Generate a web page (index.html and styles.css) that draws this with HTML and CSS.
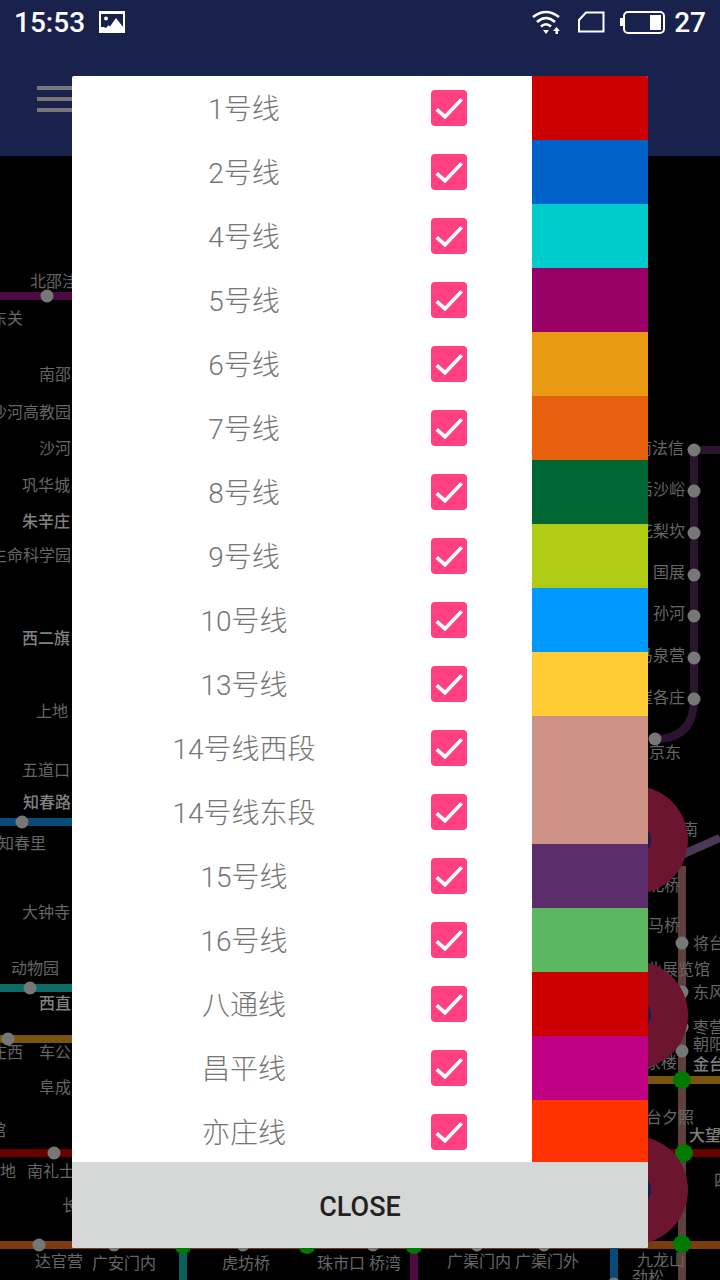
FILE: index.html
```html
<!DOCTYPE html>
<html lang="en">
<head>
    <meta charset="UTF-8">
    <meta name="viewport" content="width=device-width, initial-scale=1.0">
    <title>Subway lines</title>
    <link rel="stylesheet" href="styles.css">
</head>
<body>
    <svg class="defs" width="0" height="0">
        <symbol id="check" viewBox="0 0 36 36">
            <rect width="36" height="36" rx="4" fill="#ff4081"/>
            <polyline points="5.7,19.3 14,26.7 30.7,9.3" fill="none" stroke="#fff" stroke-width="3.6"/>
        </symbol>
    </svg>

    <div class="page">
        <header class="topbar">
            <div class="statusbar">
                <div class="status_left">
                    <span class="clock">15:53</span>
                    <svg width="26" height="22" viewBox="0 0 26 22">
                        <rect width="26" height="22" fill="#fff"/>
                        <rect x="2" y="3" width="22" height="13" fill="#19214d"/>
                        <path d="M2 20 L9 14 L11 15.500 L17 7 L24 16 L24 20 Z" fill="#fff"/>
                        <circle cx="7" cy="7.500" r="2" fill="#fff"/>
                        <path d="M5 16 L8 12.500 L10 13.500 L7 17 Z" fill="#19214d"/>
                    </svg>
                </div>
                <div class="status_right">
                    <svg class="wifi" width="31" height="24" viewBox="0 0 31 24">
                        <path d="M1 7 Q14 -3 27 7" fill="none" stroke="#fff" stroke-width="2.600"/>
                        <path d="M5 12 Q14 4 23 12" fill="none" stroke="#fff" stroke-width="2.600"/>
                        <path d="M9 16.500 Q14 12 19 16.500" fill="none" stroke="#fff" stroke-width="2.600"/>
                        <path d="M11 20 L17 20 L14 24 Z" fill="#fff"/>
                        <path d="M24.500 17 L28 21 L26 21 L26 24 L23.500 24 L23.500 21 L21 21 Z" fill="#fff"/>
                    </svg>
                    <svg class="sim" width="27" height="22" viewBox="0 0 27 22">
                        <path d="M1 20.500 L1 9 L8 1.500 L25.500 1.500 L25.500 20.500 Z" fill="none" stroke="#fff" stroke-width="2"/>
                    </svg>
                    <svg class="battery" width="45" height="24" viewBox="0 0 45 24">
                        <rect x="0" y="8" width="3" height="8" fill="#fff"/>
                        <rect x="4" y="2" width="40" height="21" rx="4" fill="none" stroke="#fff" stroke-width="2"/>
                        <rect x="30" y="5" width="11" height="15" fill="#fff"/>
                    </svg>
                    <span class="level">27</span>
                </div>
            </div>
            <div class="toolbar">
                <div class="menu_btn"><i></i><i></i><i></i></div>
            </div>
        </header>

        <svg class="map" width="720" height="1124" viewBox="0 156 720 1124">
            <g class="track" fill="none">
                <path d="M0 296 H80" stroke="#4f0a44"/>
                <path d="M0 822 H80" stroke="#0a4a78"/>
                <path d="M0 988 H80" stroke="#0d6a66"/>
                <path d="M0 1039 H80" stroke="#7a5510"/>
                <path d="M0 1153 H80" stroke="#680000"/>
                <path d="M0 1245 H720" stroke="#7d3c10"/>
                <path d="M720 450 H694 V699 Q694 739 655 739" stroke="#2c1430"/>
                <path d="M682 866 V1280" stroke="#5e403c"/>
                <path d="M670 860 L720 838" stroke="#4a3a55"/>
                <path d="M640 1080 H720" stroke="#7a5510"/>
                <path d="M640 1153 H720" stroke="#680000"/>
                <path d="M183 1245 V1280" stroke="#0d5f5f"/>
                <path d="M414 1245 V1280" stroke="#4f0a44"/>
                <path d="M614 1245 V1280" stroke="#0a4a78"/>
            </g>

            <g class="stop">
                <circle cx="47" cy="296" r="6.500"/>
                <circle cx="22" cy="822" r="6.500"/>
                <circle cx="30" cy="988" r="6.500"/>
                <circle cx="8" cy="1039" r="6.500"/>
                <circle cx="54" cy="1153" r="6.500"/>
                <circle cx="39" cy="1245" r="6.500"/>
                <circle cx="114" cy="1245" r="6.500"/>
                <circle cx="243" cy="1245" r="6.500"/>
                <circle cx="373" cy="1245" r="6.500"/>
                <circle cx="477" cy="1245" r="6.500"/>
                <circle cx="544" cy="1245" r="6.500"/>
                <circle cx="614" cy="1284" r="6.500"/>
                <circle cx="694" cy="450" r="6.500"/>
                <circle cx="694" cy="491" r="6.500"/>
                <circle cx="694" cy="533" r="6.500"/>
                <circle cx="694" cy="575" r="6.500"/>
                <circle cx="694" cy="616" r="6.500"/>
                <circle cx="694" cy="658" r="6.500"/>
                <circle cx="694" cy="699" r="6.500"/>
                <circle cx="655" cy="739" r="6.500"/>
                <circle cx="682" cy="943" r="6.500"/>
                <circle cx="682" cy="992" r="6.500"/>
                <circle cx="682" cy="1027" r="6.500"/>
                <circle cx="682" cy="1051" r="6.500"/>
            </g>
            <g class="transfer">
                <circle cx="183" cy="1245" r="9"/>
                <circle cx="307" cy="1245" r="9"/>
                <circle cx="414" cy="1245" r="9"/>
                <circle cx="682" cy="1080" r="9"/>
                <circle cx="684" cy="1153" r="9"/>
                <circle cx="682" cy="1244" r="9"/>
            </g>

            <g class="names">
                <text x="30" y="287">北邵洼</text>
                <text x="23" y="324" text-anchor="end">东关</text>
                <text x="71" y="380" text-anchor="end">南邵</text>
                <text x="71" y="418" text-anchor="end">沙河高教园</text>
                <text x="71" y="454" text-anchor="end">沙河</text>
                <text x="70" y="491" text-anchor="end">巩华城</text>
                <text class="major" x="70" y="527" text-anchor="end">朱辛庄</text>
                <text x="71" y="561" text-anchor="end">生命科学园</text>
                <text class="major" x="70" y="644" text-anchor="end">西二旗</text>
                <text x="68" y="717" text-anchor="end">上地</text>
                <text x="70" y="776" text-anchor="end">五道口</text>
                <text class="major" x="71" y="808" text-anchor="end">知春路</text>
                <text x="46" y="849" text-anchor="end">知春里</text>
                <text x="70" y="918" text-anchor="end">大钟寺</text>
                <text x="11" y="974">动物园</text>
                <text class="major" x="39" y="1009">西直门</text>
                <text x="23" y="1058" text-anchor="end">庄西</text>
                <text x="39" y="1058">车公庄</text>
                <text x="39" y="1093">阜成门</text>
                <text x="6" y="1136" text-anchor="end">馆</text>
                <text x="16" y="1177" text-anchor="end">地</text>
                <text x="27" y="1177">南礼士路</text>
                <text x="62" y="1211">长椿街</text>
                <text x="35" y="1267">达官营</text>
                <text x="92" y="1269">广安门内</text>
                <text x="222" y="1269">虎坊桥</text>
                <text x="317" y="1269">珠市口</text>
                <text x="369" y="1269">桥湾</text>
                <text x="447" y="1267">广渠门内</text>
                <text x="515" y="1267">广渠门外</text>
                <text x="637" y="1266">九龙山</text>
                <text x="632" y="1283">劲松</text>
                <text x="684" y="454" text-anchor="end">南法信</text>
                <text x="685" y="495" text-anchor="end">后沙峪</text>
                <text x="685" y="537" text-anchor="end">花梨坎</text>
                <text x="685" y="578" text-anchor="end">国展</text>
                <text x="685" y="619" text-anchor="end">孙河</text>
                <text x="685" y="661" text-anchor="end">马泉营</text>
                <text x="685" y="703" text-anchor="end">崔各庄</text>
                <text x="681" y="758" text-anchor="end">望京东</text>
                <text x="698" y="835" text-anchor="end">望京南</text>
                <text x="680" y="891" text-anchor="end">北桥</text>
                <text x="680" y="931" text-anchor="end">亮马桥</text>
                <text x="693" y="949">将台</text>
                <text x="710" y="975" text-anchor="end">农业展览馆</text>
                <text x="693" y="998">东风北桥</text>
                <text x="693" y="1033">枣营</text>
                <text x="693" y="1050">朝阳公园</text>
                <text class="major" x="693" y="1070">金台路</text>
                <text x="677" y="1068" text-anchor="end">呼家楼</text>
                <text x="694" y="1123" text-anchor="end">金台夕照</text>
                <text class="major" x="689" y="1141">大望路</text>
                <text x="714" y="1186">四惠</text>
            </g>

            <g class="hub">
                <circle cx="634" cy="840" r="54"/>
                <circle cx="634" cy="1015" r="54"/>
                <circle cx="634" cy="1190" r="54"/>
            </g>
            <g class="hub_core">
                <circle cx="634" cy="840" r="17"/>
                <circle cx="634" cy="1015" r="17"/>
                <circle cx="634" cy="1190" r="17"/>
            </g>
        </svg>
    </div>

    <div class="dialog">
        <div class="line_list">
            <div class="line_row"><span class="line_name">1号线</span><svg class="tick"><use href="#check"/></svg><span class="swatch c1"></span></div>
            <div class="line_row"><span class="line_name">2号线</span><svg class="tick"><use href="#check"/></svg><span class="swatch c2"></span></div>
            <div class="line_row"><span class="line_name">4号线</span><svg class="tick"><use href="#check"/></svg><span class="swatch c4"></span></div>
            <div class="line_row"><span class="line_name">5号线</span><svg class="tick"><use href="#check"/></svg><span class="swatch c5"></span></div>
            <div class="line_row"><span class="line_name">6号线</span><svg class="tick"><use href="#check"/></svg><span class="swatch c6"></span></div>
            <div class="line_row"><span class="line_name">7号线</span><svg class="tick"><use href="#check"/></svg><span class="swatch c7"></span></div>
            <div class="line_row"><span class="line_name">8号线</span><svg class="tick"><use href="#check"/></svg><span class="swatch c8"></span></div>
            <div class="line_row"><span class="line_name">9号线</span><svg class="tick"><use href="#check"/></svg><span class="swatch c9"></span></div>
            <div class="line_row"><span class="line_name">10号线</span><svg class="tick"><use href="#check"/></svg><span class="swatch c10"></span></div>
            <div class="line_row"><span class="line_name">13号线</span><svg class="tick"><use href="#check"/></svg><span class="swatch c13"></span></div>
            <div class="line_row"><span class="line_name">14号线西段</span><svg class="tick"><use href="#check"/></svg><span class="swatch c14"></span></div>
            <div class="line_row"><span class="line_name">14号线东段</span><svg class="tick"><use href="#check"/></svg><span class="swatch c14"></span></div>
            <div class="line_row"><span class="line_name">15号线</span><svg class="tick"><use href="#check"/></svg><span class="swatch c15"></span></div>
            <div class="line_row"><span class="line_name">16号线</span><svg class="tick"><use href="#check"/></svg><span class="swatch c16"></span></div>
            <div class="line_row"><span class="line_name">八通线</span><svg class="tick"><use href="#check"/></svg><span class="swatch c1"></span></div>
            <div class="line_row"><span class="line_name">昌平线</span><svg class="tick"><use href="#check"/></svg><span class="swatch cp"></span></div>
            <div class="line_row"><span class="line_name">亦庄线</span><svg class="tick"><use href="#check"/></svg><span class="swatch yz"></span></div>
        </div>
        <button class="close_btn">CLOSE</button>
    </div>
</body>
</html>
```

FILE: styles.css
```css
html, body {
    margin: 0;
    background: #000;
}
.defs {
    position: absolute;
}
.page {
    width: 720px;
    height: 1280px;
    overflow: hidden;
    display: flex;
    flex-direction: column;
}
.topbar {
    height: 156px;
    flex: none;
    background: #19214d;
}
.statusbar {
    height: 44px;
    padding: 0 14px;
    display: flex;
    align-items: center;
    justify-content: space-between;
    color: #fff;
    font-family: Roboto, sans-serif;
    font-size: 28px;
    font-weight: 500;
}
.status_left {
    display: flex;
    align-items: center;
    gap: 14px;
}
.status_right {
    display: flex;
    align-items: center;
}
.wifi {
    margin-right: 15px;
}
.sim {
    margin-right: 15px;
}
.battery {
    margin-right: 9px;
}
.toolbar {
    padding: 42px 0 0 37px;
}
.menu_btn i {
    display: block;
    width: 36px;
    height: 4px;
    margin-bottom: 7px;
    background: #777;
}
.map {
    display: block;
    flex: none;
}
.track path {
    stroke-width: 8;
}
.hub circle {
    fill: #6b1530;
}
.hub_core circle {
    fill: #14204f;
}
.stop circle {
    fill: #777;
}
.transfer circle {
    fill: #007a00;
}
.names text {
    font-family: "Noto Sans CJK SC", sans-serif;
    font-size: 16px;
    fill: #666;
}
.names .major {
    font-weight: 500;
    fill: #808080;
}

/* dialog over the map */
.dialog {
    position: absolute;
    left: 72px;
    top: 76px;
    width: 576px;
    height: 1172px;
    display: flex;
    flex-direction: column;
    border-radius: 2px;
    overflow: hidden;
    background: #fff;
}
.line_list {
    flex: 1;
    min-height: 0;
    overflow: hidden;
}
.line_row {
    height: 64px;
    display: flex;
    align-items: center;
}
.line_name {
    width: 344px;
    padding-bottom: 2px;
    text-align: center;
    font-family: Roboto, "Noto Sans CJK SC", sans-serif;
    font-size: 28px;
    font-weight: 300;
    color: #757575;
}
.tick {
    width: 36px;
    height: 36px;
    margin-left: 15px;
}
.swatch {
    height: 64px;
    width: 116px;
    margin-left: auto;
}
.c1 { background: #cc0000; }
.c2 { background: #0061c8; }
.c4 { background: #00cccc; }
.c5 { background: #990066; }
.c6 { background: #ea9a12; }
.c7 { background: #e8610f; }
.c8 { background: #006633; }
.c9 { background: #afcb14; }
.c10 { background: #0099ff; }
.c13 { background: #ffcc33; }
.c14 { background: #cf9286; }
.c15 { background: #5c2d6b; }
.c16 { background: #5cb860; }
.cp { background: #bf0085; }
.yz { background: #ff3300; }
.close_btn {
    height: 86px;
    flex: none;
    border: 0;
    padding: 4px 0 0;
    background: #d6d8d8;
    color: #222;
    font-family: Roboto, sans-serif;
    font-size: 27px;
    font-weight: 500;
}
```
